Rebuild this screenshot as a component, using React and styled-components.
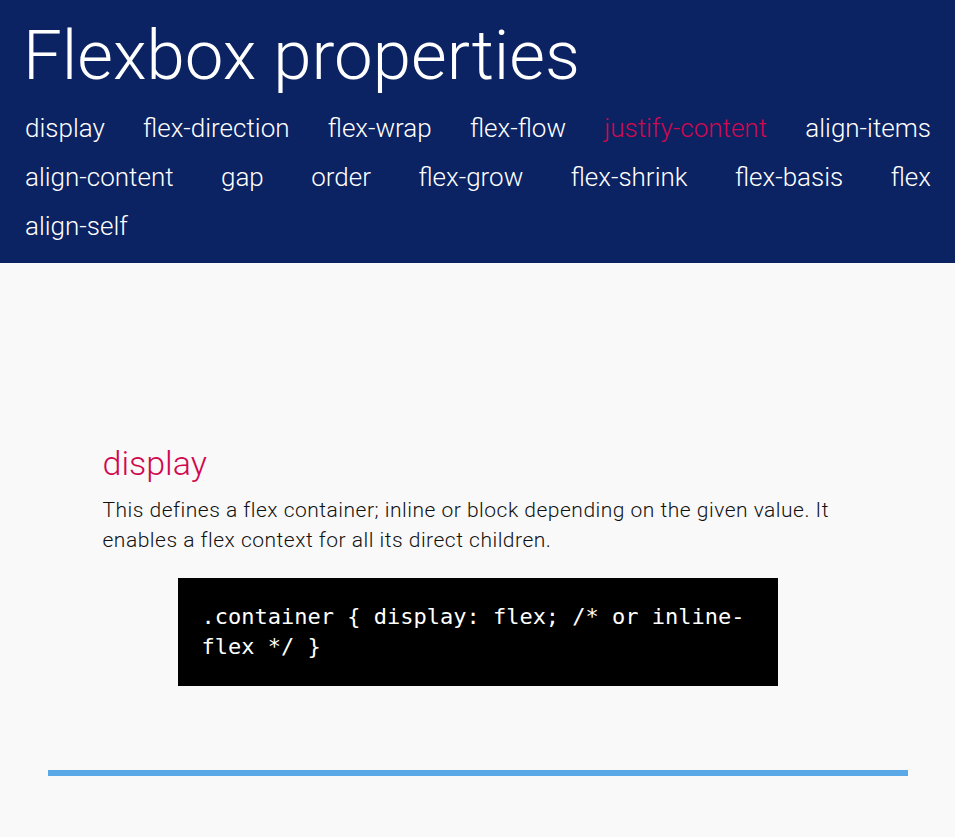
import React from 'react';
import styled, { createGlobalStyle } from 'styled-components';

const GlobalStyle = createGlobalStyle`
  html, body {
    margin: 0;
    padding: 0;
    background: #f9f9f9;
    font-family: Roboto, "Noto Sans", sans-serif;
  }
`;

const StyledHeader = styled.header`
  background: #0b2263;
  padding: 16px 24px 12px 25px;
  color: #fff;
`;

const Title = styled.h1`
  margin: 0 0 0 -2px;
  font-size: 69px;
  font-weight: 300;
  line-height: 80px;
`;

const NavList = styled.ul`
  list-style: none;
  margin: 8px 0 0;
  padding: 0;
  display: flex;
  flex-wrap: wrap;
  justify-content: space-between;
  column-gap: 30px;
`;

const NavItem = styled.li`
  font-size: 26px;
  font-weight: 300;
  line-height: 49px;
  color: ${(p) => (p.$active ? '#d0094f' : '#fff')};
  cursor: pointer;
`;

const Main = styled.main`
  max-width: 750px;
  margin: 0 auto;
  padding-top: 180px;
`;

const PropTitle = styled.h2`
  margin: 0 0 11px;
  font-size: 34px;
  font-weight: 300;
  line-height: 41px;
  color: #d0094f;
`;

const Description = styled.p`
  margin: 0;
  font-size: 21px;
  font-weight: 300;
  letter-spacing: 0.5px;
  line-height: 30px;
  color: #111;
`;

const CodeBlock = styled.pre`
  width: 600px;
  box-sizing: border-box;
  margin: 23px auto 0;
  padding: 24px;
  background: #000;
  color: #fff;
  font-family: "DejaVu Sans Mono", "Liberation Mono", monospace;
  font-size: 22px;
  line-height: 30px;
  white-space: pre-wrap;
`;

const Divider = styled.hr`
  width: 860px;
  height: 6px;
  margin: 84px auto 0;
  border: 0;
  background: #5aa9e6;
`;

const properties = [
  'display',
  'flex-direction',
  'flex-wrap',
  'flex-flow',
  'justify-content',
  'align-items',
  'align-content',
  'gap',
  'order',
  'flex-grow',
  'flex-shrink',
  'flex-basis',
  'flex',
  'align-self',
];

const code = '.container { display: flex; /* or inline-flex */ }';

const App = () => (
  <>
    <GlobalStyle />
    <StyledHeader>
      <Title>Flexbox properties</Title>
      <NavList>
        {properties.map((prop) => (
          <NavItem key={prop} $active={prop === 'justify-content'}>
            {prop}
          </NavItem>
        ))}
      </NavList>
    </StyledHeader>
    <Main>
      <PropTitle>display</PropTitle>
      <Description>
        This defines a flex container; inline or block depending on the given value. It
        enables a flex context for all its direct children.
      </Description>
      <CodeBlock>{code}</CodeBlock>
    </Main>
    <Divider />
  </>
);

export default App;
